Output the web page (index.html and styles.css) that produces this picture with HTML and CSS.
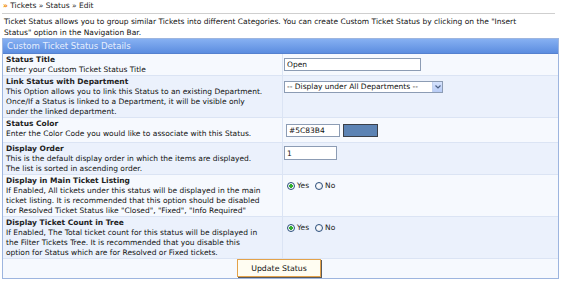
FILE: index.html
```html
<!DOCTYPE html>
<html>
<head>
<meta charset="utf-8">
<link rel="stylesheet" href="styles.css">
</head>
<body>
<div class="crumb"><span class="raquo">»</span> Tickets » Status » Edit</div>
<div class="rule"></div>
<p class="intro">Ticket Status allows you to group similar Tickets into different Categories. You can create Custom Ticket Status by clicking on the "Insert<br>Status" option in the Navigation Bar.</p>
<div class="panel">
  <div class="panel-head">Custom Ticket Status Details</div>
  <table class="form">
    <tr class="r1">
      <td class="lbl"><b>Status Title</b><br>Enter your Custom Ticket Status Title</td>
      <td class="fld"><input class="txt w-title" type="text" value="Open"></td>
    </tr>
    <tr class="r2">
      <td class="lbl"><b>Link Status with Department</b><br>This Option allows you to link this Status to an existing Department.<br>Once/If a Status is linked to a Department, it will be visible only<br>under the linked department.</td>
      <td class="fld fld-sel"><span class="sel"><select><option>-- Display under All Departments --</option></select><span class="arrow"><svg width="6" height="4" viewBox="0 0 6 4"><path d="M0.5 0.5 L3 3 L5.5 0.5" fill="none" stroke="#4d6185" stroke-width="1.2"/></svg></span></span></td>
    </tr>
    <tr class="r1">
      <td class="lbl"><b>Status Color</b><br>Enter the Color Code you would like to associate with this Status.</td>
      <td class="fld fld-color"><div class="colorline"><input class="txt w-color" type="text" value="#5C83B4"><span class="swatch"></span></div></td>
    </tr>
    <tr class="r2">
      <td class="lbl"><b>Display Order</b><br>This is the default display order in which the items are displayed.<br>The list is sorted in ascending order.</td>
      <td class="fld fld-order"><input class="txt w-order" type="text" value="1"></td>
    </tr>
    <tr class="r1">
      <td class="lbl"><b>Display in Main Ticket Listing</b><br>If Enabled, All tickets under this status will be displayed in the main<br>ticket listing. It is recommended that this option should be disabled<br>for Resolved Ticket Status like "Closed", "Fixed", "Info Required"</td>
      <td class="fld"><div class="radios"><label><input type="radio" name="main" checked> Yes</label><label><input type="radio" name="main"> No</label></div></td>
    </tr>
    <tr class="r2">
      <td class="lbl"><b>Display Ticket Count in Tree</b><br>If Enabled, The Total ticket count for this status will be displayed in<br>the Filter Tickets Tree. It is recommended that you disable this<br>option for Status which are for Resolved or Fixed tickets.</td>
      <td class="fld"><div class="radios"><label><input type="radio" name="tree" checked> Yes</label><label><input type="radio" name="tree"> No</label></div></td>
    </tr>
  </table>
  <div class="actions"><button class="btn" type="button">Update Status</button></div>
</div>
</body>
</html>
```

FILE: styles.css
```css
html, body {
  margin: 0;
  padding: 0;
  background: #ffffff;
}
body {
  font-family: "DejaVu Sans", Verdana, sans-serif;
  font-size: 7.5px;
  line-height: 10px;
  color: #1a1a1a;
  padding: 0 2px;
}
.crumb {
  padding: 1px 1px 0;
  height: 10px;
  color: #222;
}
.raquo {
  color: #f08a00;
  font-weight: bold;
}
.rule {
  margin-top: 2px;
  height: 1px;
  background: #cfcfcf;
  margin-right: 4px;
}
.intro {
  margin: 3px 0 0 2px;
  line-height: 10.5px;
  color: #111;
}
.panel {
  margin-top: 0;
  border: 1px solid #9db5df;
  background: #f6f9fe;
}
.panel-head {
  height: 14px;
  line-height: 14px;
  padding-left: 4px;
  font-size: 8.6px;
  color: #e6eefd;
  background: linear-gradient(#86b0f2, #5c8de0);
  border-bottom: 1px solid #5581cf;
}
.form {
  width: 100%;
  border-collapse: collapse;
}
.form td {
  vertical-align: top;
  border-bottom: 1px solid #dbe4f4;
}
.r1 td { background: #f6f9fe; }
.r2 td { background: #ebf1fc; }
.lbl {
  width: 274px;
  padding: 1px 2px 0 3px;
  border-right: 1px solid #dbe4f4;
  white-space: nowrap;
  color: #111;
}
.lbl b {
  color: #222;
}
.fld {
  padding: 4px 0 0 1px;
}
.fld-sel {
  padding-top: 5px;
}
.fld-color {
  padding-top: 6px;
  padding-bottom: 5px;
}
.fld-order {
  padding-top: 3px;
}
.txt {
  box-sizing: border-box;
  height: 13px;
  border: 1px solid #8c9cb4;
  background: #fff;
  font: 7.5px "DejaVu Sans", Verdana, sans-serif;
  color: #111;
  padding: 0 2px;
  margin: 0;
  display: block;
}
.w-title { width: 137px; }
.w-order { width: 53px; height: 14px; }
.w-color { width: 54px; }
.colorline {
  display: flex;
  gap: 3px;
  padding-left: 2px;
}
.swatch {
  width: 35px;
  height: 13px;
  box-sizing: border-box;
  background: #5C83B4;
  border: 1px solid #3a3f48;
}
.sel {
  display: inline-flex;
  border: 1px solid #8c9cb4;
  background: #fff;
  box-sizing: border-box;
  height: 12px;
}
.sel select {
  appearance: none;
  -webkit-appearance: none;
  border: 0;
  background: #fff;
  font: 7.5px "DejaVu Sans", Verdana, sans-serif;
  color: #111;
  width: 147px;
  height: 10px;
  padding: 0 0 0 2px;
  margin: 0;
  line-height: 10px;
}
.arrow {
  width: 9px;
  height: 10px;
  background: linear-gradient(#d6e3fd, #b8ccf6);
  border-left: 1px solid #c3d2ef;
  display: flex;
  align-items: center;
  justify-content: center;
}
.radios {
  display: flex;
  gap: 6px;
  padding: 2px 0 0 3px;
}
.radios label {
  display: flex;
  align-items: center;
  gap: 2px;
  font-size: 7.5px;
  color: #222;
}
.radios input {
  appearance: none;
  -webkit-appearance: none;
  margin: 0;
  width: 8px;
  height: 8px;
  border: 1px solid #2b4f7c;
  border-radius: 50%;
  background: radial-gradient(circle at 40% 40%, #ffffff, #dfe3ea);
  box-sizing: border-box;
}
.radios input:checked {
  background: radial-gradient(circle, #2fae2f 0 1.6px, #f4f6f8 2px);
}
.actions {
  display: flex;
  justify-content: center;
  padding: 0 0 1px;
  background: #f6f9fe;
}
.btn {
  width: 84px;
  height: 18px;
  background: #fffdf2;
  border: 1px solid #e3a24a;
  box-shadow: 1px 1px 0 #5a5a5a;
  font: 7.8px "DejaVu Sans", Verdana, sans-serif;
  color: #111;
  padding: 0;
  margin-left: -3px;
}
```
